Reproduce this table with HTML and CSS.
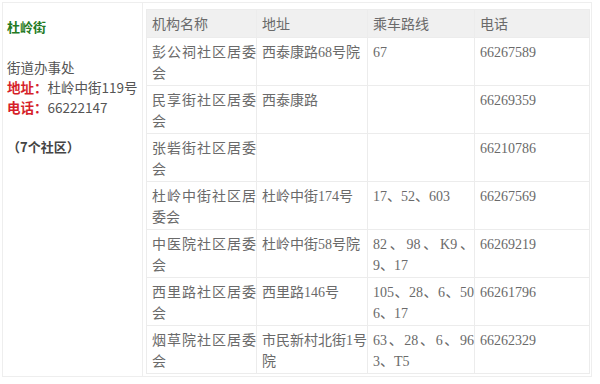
FILE: index.html
```html
<!DOCTYPE html>
<html lang="zh-CN">
<head>
<meta charset="utf-8">
<link rel="stylesheet" href="styles.css">
</head>
<body>
<div class="page">
<table class="outer">
<tr>
<td class="left">
<p class="street">杜岭街</p>
<p class="info">街道办事处<br><span class="lbl">地址：</span>杜岭中街119号<br><span class="lbl">电话：</span>66222147</p>
<p class="count">（7个社区）</p>
</td>
<td class="right">
<table class="inner">
<colgroup><col class="c1"><col class="c2"><col class="c3"><col class="c4"></colgroup>
<tr class="head"><td>机构名称</td><td>地址</td><td>乘车路线</td><td>电话</td></tr>
<tr><td>彭公祠社区居委会</td><td>西泰康路68号院</td><td>67</td><td>66267589</td></tr>
<tr><td>民享街社区居委会</td><td>西泰康路</td><td></td><td>66269359</td></tr>
<tr><td>张砦街社区居委会</td><td></td><td></td><td>66210786</td></tr>
<tr><td>杜岭中街社区居委会</td><td>杜岭中街174号</td><td>17、52、603</td><td>66267569</td></tr>
<tr><td>中医院社区居委会</td><td>杜岭中街58号院</td><td>82、98、K9、9、17</td><td>66269219</td></tr>
<tr><td>西里路社区居委会</td><td>西里路146号</td><td>105、28、6、506、17</td><td>66261796</td></tr>
<tr><td>烟草院社区居委会</td><td>市民新村北街1号院</td><td>63、28、6、963、T5</td><td>66262329</td></tr>
</table>
</td>
</tr>
</table>
</div>
</body>
</html>
```

FILE: styles.css
```css
html, body {
  margin: 0;
  padding: 0;
  background: #fff;
}
.page {
  padding: 2px 0 0 2px;
}
.outer {
  width: 590px;
  border-collapse: collapse;
  border: 1px solid #eeeeee;
}
.outer > tbody > tr > td {
  padding: 0;
  vertical-align: top;
}
.left {
  width: 140px;
  border-right: 1px solid #eeeeee;
  font-family: "Noto Sans CJK SC", "Noto Sans", sans-serif;
  font-size: 13.5px;
  color: #555555;
}
.left p {
  margin: 0;
  line-height: 20px;
  padding-left: 4px;
}
.left .street {
  margin-top: 14px;
  margin-bottom: 20px;
  font-weight: bold;
  font-size: 13px;
  color: #237a23;
}
.left .lbl {
  color: #d61f2a;
  font-weight: bold;
}
.left .count {
  margin-top: 20px;
  font-weight: bold;
  font-size: 13px;
  color: #444444;
}
.outer > tbody > tr > td.right {
  padding: 6px 1px 2px 3px;
}
.inner {
  width: 443px;
  border-collapse: collapse;
  table-layout: fixed;
  border: 1px solid #ececec;
  font-family: "Liberation Serif", "Noto Sans CJK SC", serif;
  font-size: 14px;
  color: #6a6a6a;
}
.c1 { width: 110px; }
.c2 { width: 111px; }
.c3 { width: 107px; }
.c4 { width: 115px; }
.inner td {
  border: 1px solid #ececec;
  padding: 4px 0 1px 5px;
  line-height: 21px;
  height: 42px;
  vertical-align: top;
  text-align: justify;
  word-break: break-all;
}
.inner tr.head td {
  background: #f0f0f0;
  height: 21px;
  padding: 4px 0 2px 5px;
}
```
